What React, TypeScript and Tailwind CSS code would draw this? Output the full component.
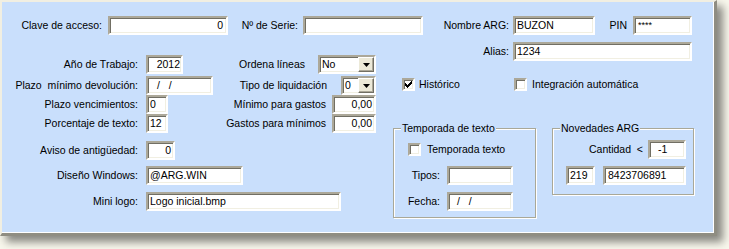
import React from "react";

const sunken =
  "border-2 border-t-[#aca899] border-l-[#aca899] border-r-white border-b-white shadow-[inset_1px_1px_0_#716f64,inset_-1px_-1px_0_#f1efe2]";

function Field({ className = "", children }: { className?: string; children?: React.ReactNode }) {
  return (
    <div className={`h-[19px] ${sunken} bg-white flex items-center whitespace-pre overflow-hidden ${className}`}>
      {children}
    </div>
  );
}

function Select({ className = "", value }: { className?: string; value: string }) {
  return (
    <div className={`h-[19px] ${sunken} bg-white flex items-stretch ${className}`}>
      <span className="flex-1 flex items-center pl-[2px]">{value}</span>
      <span className="w-[16px] bg-[#ece9d8] border border-t-white border-l-white border-r-[#716f64] border-b-[#716f64] shadow-[inset_-1px_-1px_0_#aca899] flex items-center justify-center">
        <svg width="7" height="4" viewBox="0 0 7 4">
          <path d="M0 0h7L3.5 4z" fill="#000" />
        </svg>
      </span>
    </div>
  );
}

function Check({ checked = false, className = "" }: { checked?: boolean; className?: string }) {
  return (
    <div className={`w-[13px] h-[13px] shrink-0 ${sunken} bg-white flex items-center justify-center ${className}`}>
      {checked && (
        <svg width="7" height="7" viewBox="0 0 7 7" shapeRendering="crispEdges">
          <polygon points="0,2 2,4 7,-1 7,2 2,7 0,5" fill="#000" />
        </svg>
      )}
    </div>
  );
}

function Group({ title, className = "", children }: { title: string; className?: string; children: React.ReactNode }) {
  return (
    <fieldset
      className={`border border-[#a9a898] shadow-[inset_1px_1px_0_#fff,1px_1px_0_#fff] ${className}`}
    >
      <legend className="ml-[7px] px-[1px] leading-[13px] bg-[#c9dffc]">{title}</legend>
      {children}
    </fieldset>
  );
}

export default function App() {
  return (
    <div className="w-[729px] h-[249px] bg-[#f8f7ec] font-['Liberation_Sans',Arial,sans-serif] text-[10.5px] leading-[13px] text-black">
      <div className="w-[717px] h-[236px] bg-[#c9dffc] border-t-2 border-l-2 border-t-[#f1efe2] border-l-[#f1efe2] border-r-[3px] border-b-[3px] border-r-[#8f8d82] border-b-[#8f8d82] shadow-[inset_-1px_-1px_0_#fff,6px_6px_8px_rgba(0,0,0,0.45)] pt-[14px]">
        {/* top row */}
        <div className="flex items-center h-[19px]">
          <span className="w-[100px] text-right">Clave de acceso:</span>
          <Field className="ml-[6px] w-[120px] justify-end pr-[3px]">0</Field>
          <span className="w-[70px] text-right">Nº de Serie:</span>
          <Field className="ml-[5px] w-[120px]" />
          <span className="w-[86px] text-right">Nombre ARG:</span>
          <Field className="ml-[4px] w-[82px] px-[2px]">BUZON</Field>
          <span className="w-[32px] text-right">PIN</span>
          <Field className="ml-[6px] w-[59px] px-[3px] text-[9px] items-start pt-[1px]">****</Field>
        </div>

        <div className="flex mt-[7px]">
          {/* left + middle */}
          <div className="w-[374px] mt-[13px]">
            <div className="flex items-center h-[19px]">
              <span className="w-[136px] text-right">Año de Trabajo:</span>
              <Field className="ml-[8px] w-[37px] justify-end pr-[1px]">2012</Field>
              <span className="flex-1" />
              <span>Ordena líneas</span>
              <Select className="ml-[13px] w-[58px]" value="No" />
            </div>
            <div className="flex items-center h-[19px] mt-[2px]">
              <span className="w-[136px] text-right whitespace-pre">Plazo  mínimo devolución:</span>
              <Field className="ml-[8px] w-[67px] pl-[9px]">/   /</Field>
              <span className="flex-1" />
              <span>Tipo de liquidación</span>
              <Select className="ml-[14px] w-[35px]" value="0" />
            </div>
            <div className="flex items-center h-[19px]">
              <span className="w-[136px] text-right">Plazo vencimientos:</span>
              <Field className="ml-[8px] w-[22px] px-[2px]">0</Field>
              <span className="flex-1" />
              <span>Mínimo para gastos</span>
              <Field className="ml-[6px] w-[44px] justify-end pr-[2px]">0,00</Field>
            </div>
            <div className="flex items-center h-[19px]">
              <span className="w-[136px] text-right">Porcentaje de texto:</span>
              <Field className="ml-[8px] w-[22px] px-[2px]">12</Field>
              <span className="flex-1" />
              <span>Gastos para mínimos</span>
              <Field className="ml-[6px] w-[44px] justify-end pr-[2px]">0,00</Field>
            </div>
            <div className="flex items-center h-[19px] mt-[8px]">
              <span className="w-[136px] text-right">Aviso de antigüedad:</span>
              <Field className="ml-[8px] w-[29px] justify-end pr-[2px]">0</Field>
            </div>
            <div className="flex items-center h-[19px] mt-[6px]">
              <span className="w-[136px] text-right">Diseño Windows:</span>
              <Field className="ml-[8px] w-[97px] px-[2px]">@ARG.WIN</Field>
            </div>
            <div className="flex items-center h-[19px] mt-[7px]">
              <span className="w-[136px] text-right">Mini logo:</span>
              <Field className="ml-[8px] w-[195px] px-[2px]">Logo inicial.bmp</Field>
            </div>
          </div>

          {/* right side */}
          <div className="ml-[17px] w-[301px]">
            <div className="flex items-center justify-end h-[19px] pr-[2px]">
              <span>Alias:</span>
              <Field className="ml-[4px] w-[179px] px-[2px]">1234</Field>
            </div>
            <div className="flex items-center h-[13px] mt-[17px]">
              <div className="w-[121px] flex items-center pl-[9px]">
                <Check checked />
                <span className="ml-[4px]">Histórico</span>
              </div>
              <Check />
              <span className="ml-[5px]">Integración automática</span>
            </div>

            <div className="flex mt-[31px]">
              <Group title="Temporada de texto" className="w-[143px] h-[96px]">
                <div className="flex items-center h-[13px] mt-[8px] pl-[14px]">
                  <Check />
                  <span className="ml-[6px]">Temporada texto</span>
                </div>
                <div className="flex items-center h-[19px] mt-[10px]">
                  <span className="w-[46px] text-right">Tipos:</span>
                  <Field className="ml-[7px] w-[66px]" />
                </div>
                <div className="flex items-center h-[19px] mt-[7px]">
                  <span className="w-[46px] text-right">Fecha:</span>
                  <Field className="ml-[7px] w-[66px] pl-[8px]">/   /</Field>
                </div>
              </Group>
              <Group title="Novedades ARG" className="ml-[16px] w-[142px] h-[73px]">
                <div className="flex items-center justify-end h-[19px] mt-[5px] pr-[7px]">
                  <span className="whitespace-pre">Cantidad  &lt;</span>
                  <Field className="ml-[5px] w-[38px] pl-[8px]">-1</Field>
                </div>
                <div className="flex items-center h-[19px] mt-[7px] pl-[13px]">
                  <Field className="w-[29px] px-[2px]">219</Field>
                  <Field className="ml-[8px] w-[83px] px-[3px]">8423706891</Field>
                </div>
              </Group>
            </div>
          </div>
        </div>
      </div>
    </div>
  );
}
